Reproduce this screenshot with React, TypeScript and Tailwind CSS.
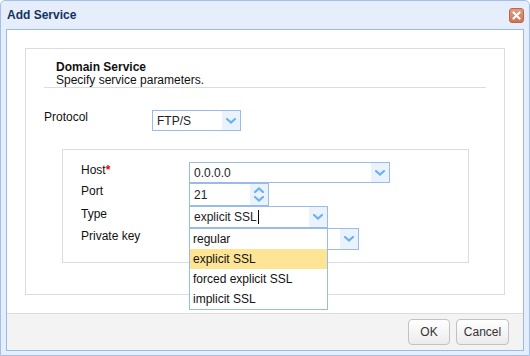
import React from 'react';

const Chevron = ({ up = false }: { up?: boolean }) => (
  <svg width="10" height="6" viewBox="0 0 10 6" className="block">
    <polyline
      points={up ? '1,5 5,1.5 9,5' : '1,1 5,4.5 9,1'}
      fill="none"
      stroke="#6cb2ec"
      strokeWidth="2.2"
      strokeLinecap="square"
    />
  </svg>
);

const Trigger = () => (
  <div className="w-[18px] h-full bg-[#eaf3fd] flex items-center justify-center">
    <Chevron />
  </div>
);

const Combo = ({ value, w, h = 'h-[21px]', cursor = false }: { value: string; w: string; h?: string; cursor?: boolean }) => (
  <div className={`${w} ${h} border border-[#99bbe8] bg-white flex items-stretch`}>
    <div className="flex-1 flex items-center pl-[4px] text-[12px] text-[#222]">
      {value}
      {cursor && <span className="inline-block w-px h-[14px] bg-black ml-[1px]" />}
    </div>
    <Trigger />
  </div>
);

const TYPES = ['regular', 'explicit SSL', 'forced explicit SSL', 'implicit SSL'];

export default function App() {
  return (
    <div className="w-[530px] h-[356px] bg-white" style={{ fontFamily: '"Liberation Sans", Arial, sans-serif' }}>
      <div className="w-full h-full rounded-t-[5px] border border-[#a3c0ea] bg-[#e6eefb] flex flex-col px-[5px] pb-[4px]">
        {/* title bar */}
        <div className="h-[28px] flex items-center justify-between shrink-0">
          <span className="pl-[1px] text-[12px] font-bold text-[#15335f] leading-[14px]">Add Service</span>
          <div className="w-[15px] h-[15px] mt-[1px] rounded-[3px] border border-[#b8674c] bg-gradient-to-b from-[#e39c82] to-[#cf7355] flex items-center justify-center">
            <svg width="9" height="9" viewBox="0 0 9 9">
              <path d="M1.5 1.5 L7.5 7.5 M7.5 1.5 L1.5 7.5" stroke="#fff" strokeWidth="2.2" strokeLinecap="round" />
            </svg>
          </div>
        </div>

        {/* body */}
        <div className="flex-1 border border-[#99bbe8] bg-white flex flex-col">
          <div className="flex-1 pt-[18px] px-[18px]">
            <div className="h-[247px] border border-[#dcdcdc] flex flex-col">
              <div className="mx-[18px] mt-[12px] pl-[12px] border-b border-[#dcdcdc] text-[12px] leading-[13px] text-[#111]">
                <div className="font-bold">Domain Service</div>
                <div>Specify service parameters.</div>
              </div>

              <div className="mt-[22px] ml-[18px] flex items-start h-[21px]">
                <div className="w-[108px] text-[12px] leading-[14px] text-[#111]">Protocol</div>
                <Combo value="FTP/S" w="w-[89px]" />
              </div>

              <div className="mt-[18px] ml-[36px] mr-[35px] border border-[#dcdcdc] pt-[12px] pb-[12px] pl-[18px]">
                <div className="flex items-start h-[21px]">
                  <div className="w-[108px] pt-[1px] text-[12px] leading-[14px] text-[#111]">
                    Host<span className="text-[#e00] font-bold">*</span>
                  </div>
                  <Combo value="0.0.0.0" w="w-[201px]" />
                </div>
                <div className="flex items-start h-[23px]">
                  <div className="w-[108px] text-[12px] leading-[14px] pt-[1px] text-[#111]">Port</div>
                  <div className="w-[80px] h-[23px] border border-[#99bbe8] bg-white flex items-stretch">
                    <div className="flex-1 flex items-center pl-[4px] text-[12px] text-[#222]">21</div>
                    <div className="w-[18px] h-full bg-[#eaf3fd] flex flex-col items-center justify-center gap-[3px]">
                      <Chevron up />
                      <Chevron />
                    </div>
                  </div>
                </div>
                <div className="flex items-start h-[22px]">
                  <div className="w-[108px] pt-[1px] text-[12px] leading-[14px] text-[#111]">Type</div>
                  <div className="relative">
                    <Combo value="explicit SSL" w="w-[139px]" h="h-[22px]" cursor />
                    <div className="absolute left-0 top-full z-10 w-[139px] border border-[#99bbe8] bg-white text-[12px] text-[#111]">
                      {TYPES.map(t => (
                        <div
                          key={t}
                          className={`h-[20px] flex items-center pl-[3px] ${t === 'explicit SSL' ? 'bg-[#fde595]' : ''}`}
                        >
                          {t}
                        </div>
                      ))}
                    </div>
                  </div>
                </div>
                <div className="flex items-start h-[22px]">
                  <div className="w-[108px] pt-[1px] text-[12px] leading-[14px] text-[#111]">Private key</div>
                  <Combo value="" w="w-[170px]" h="h-[22px]" />
                </div>
              </div>
            </div>
          </div>

          {/* footer */}
          <div className="h-[37px] border-t border-[#dcdcdc] bg-[#f3f3f3] flex items-center justify-end gap-[6px] pr-[14px]">
            <button className="w-[42px] h-[26px] rounded-[4px] border border-[#c2c2c2] bg-gradient-to-b from-white to-[#ebebeb] text-[12px] text-[#333]">
              OK
            </button>
            <button className="w-[53px] h-[26px] rounded-[4px] border border-[#c2c2c2] bg-gradient-to-b from-white to-[#ebebeb] text-[12px] text-[#333]">
              Cancel
            </button>
          </div>
        </div>
      </div>
    </div>
  );
}
